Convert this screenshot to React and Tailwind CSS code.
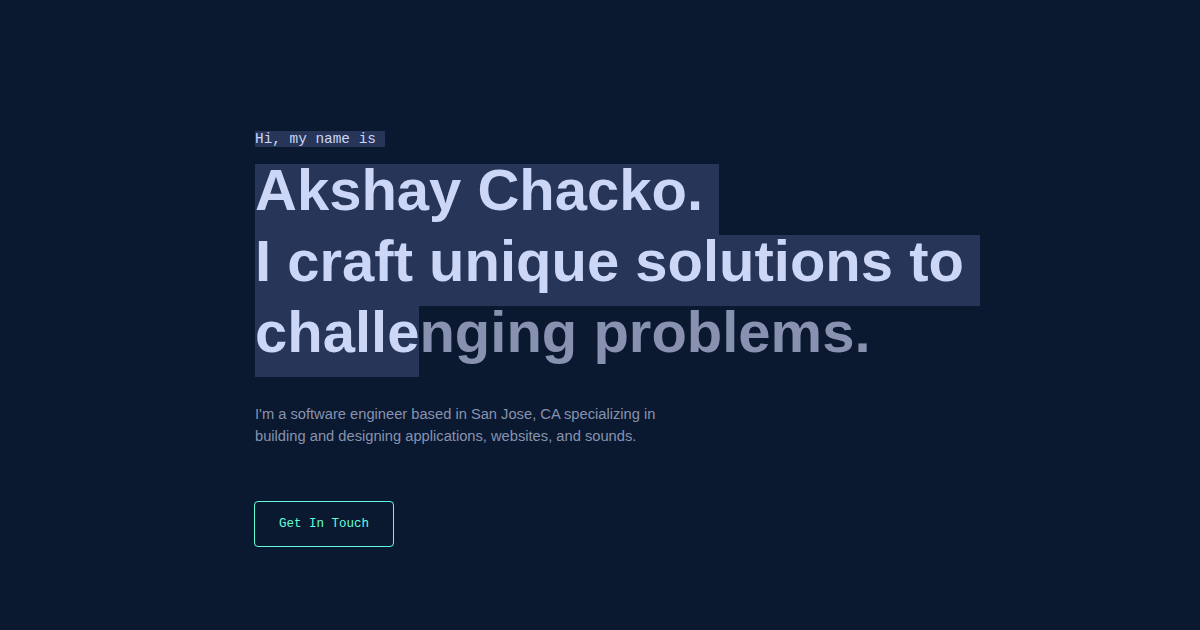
export default function App() {
  return (
    <div className="w-full h-[630px] bg-[#0a192f] overflow-hidden">
      <section className="flex flex-col items-start pl-[255px] pt-[131px]">
        <h1 className="font-['Liberation_Mono',monospace] text-[14.4px] leading-[17px] text-[#ccd6f6]">
          <span className="bg-[#263558] whitespace-pre">Hi, my name is </span>
        </h1>
        <div className="mt-[16px] flex flex-col font-['Liberation_Sans',Arial,sans-serif] font-bold text-[58px] text-[#ccd6f6] whitespace-pre">
          <div className="flex">
            <span className="h-[71px] leading-[51px] bg-[#263558]">Akshay Chacko. </span>
          </div>
          <div className="flex">
            <span className="h-[71px] leading-[51px] bg-[#263558]">I craft unique solutions to </span>
          </div>
          <div className="flex">
            <span className="h-[71px] leading-[51px] bg-[#263558]">challe</span>
            <span className="h-[71px] leading-[51px] text-[#8892b0]">nging problems.</span>
          </div>
        </div>
        <p className="mt-[26px] font-['Liberation_Sans',Arial,sans-serif] text-[14.7px] leading-[22px] text-[#8892b0]">
          I'm a software engineer based in San Jose, CA specializing in
          <br />
          building and designing applications, websites, and sounds.
        </p>
        <a
          href="#"
          className="mt-[54px] -ml-px flex items-center justify-center w-[140px] h-[46px] border border-[#64ffda] rounded-[4px] font-['Liberation_Mono',monospace] text-[12.5px] text-[#64ffda]"
        >
          Get In Touch
        </a>
      </section>
    </div>
  );
}
